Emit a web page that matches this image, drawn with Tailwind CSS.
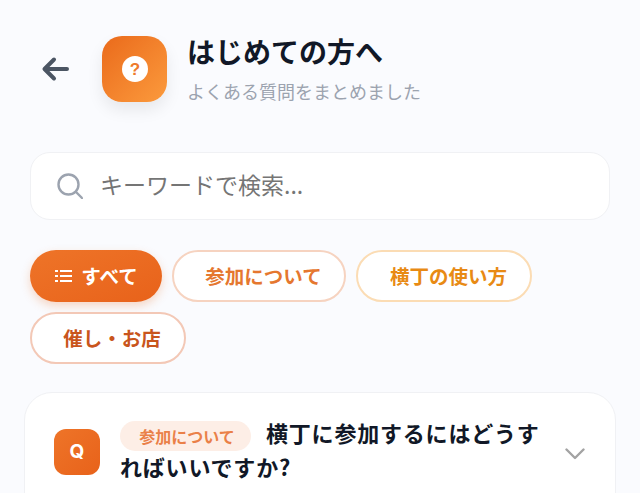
<!DOCTYPE html>
<html lang="ja">
  <head>
    <meta charset="UTF-8" />
    <meta name="viewport" content="width=device-width, initial-scale=1.0" />
    <title>はじめての方へ</title>
    <script src="https://cdn.jsdelivr.net/npm/@tailwindcss/browser@4"></script>
  </head>

  <body class="bg-[#fafbfe] h-[493px] overflow-hidden font-['Noto_Sans_CJK_JP',sans-serif]">
    <header class="flex items-center h-[66px] pl-[40px] mt-[36px]">
      <svg class="w-[32px] h-[32px] text-[#4b5563]" viewBox="0 0 32 32" fill="none" stroke="currentColor" stroke-width="4" stroke-linecap="round" stroke-linejoin="round">
        <path d="M27 16H5M14 6.500 4.500 16l9.500 9.500" />
      </svg>
      <div class="ml-[30px] w-[65px] h-[66px] rounded-[20px] flex items-center justify-center bg-gradient-to-br from-[#ea6a1a] to-[#fb9a3c] shadow-[0_8px_16px_rgba(0,0,0,0.08)]">
        <svg class="w-[26px] h-[26px]" viewBox="0 0 26 26">
          <circle cx="13" cy="13" r="13" fill="#fff" />
          <text x="13" y="19" text-anchor="middle" font-size="17" font-weight="900" fill="#ee7a2a" font-family="Liberation Sans">?</text>
        </svg>
      </div>
      <div class="ml-[20px]">
        <h1 class="text-[28px] leading-[32px] font-bold text-[#111827] -mt-[1px]">はじめての方へ</h1>
        <p class="text-[18px] leading-[24px] text-[#9ca3af] mt-[12px]">よくある質問をまとめました</p>
      </div>
    </header>

    <div class="mx-[30px] mt-[50px] h-[68px] rounded-[20px] bg-white border border-[#f0f1f4] flex items-center pl-[26px]">
      <svg class="w-[26px] h-[26px] text-[#9ca3af]" viewBox="0 0 26 26" fill="none" stroke="currentColor" stroke-width="2.400" stroke-linecap="round">
        <circle cx="11.500" cy="11.500" r="10" />
        <path d="M19 19l6 6" />
      </svg>
      <span class="ml-[17px] text-[23px] leading-[30px] -mt-[5px] text-[#757575]">キーワードで検索...</span>
    </div>

    <div class="flex flex-wrap gap-[10px] mx-[30px] mt-[30px]">
      <button class="h-[52px] w-[132px] rounded-full flex items-center justify-center gap-[9px] text-white text-[19.500px] font-bold bg-gradient-to-br from-[#ee7428] to-[#e8621a] shadow-[0_4px_10px_rgba(234,106,26,0.25)]">
        <svg class="w-[18px] h-[14px]" viewBox="0 0 18 14" fill="none" stroke="#fff" stroke-width="2">
          <path d="M1 2h3M1 7h3M1 12h3" />
          <path d="M6 2h12M6 7h12M6 12h12" />
        </svg>
        すべて
      </button>
      <button class="h-[52px] w-[174px] pl-[9px] rounded-full bg-white border-2 border-[#f6d3c0] text-[#e5772f] text-[19.500px] font-bold">参加について</button>
      <button class="h-[52px] w-[176px] pl-[9px] rounded-full bg-white border-2 border-[#fbdcb4] text-[#e88a14] text-[19.500px] font-bold">横丁の使い方</button>
      <button class="h-[52px] w-[156px] pl-[8px] rounded-full bg-white border-2 border-[#f3c8b6] text-[#c9551c] text-[19.500px] font-bold">催し・お店</button>
    </div>

    <div class="mx-[24px] mt-[28px] bg-white rounded-[28px] border border-[#f0f1f4] pl-[29px] pr-[30px] pt-[24px] pb-[40px] flex items-start">
      <div class="w-[46px] h-[46px] mt-[12px] rounded-[12px] shrink-0 flex items-center justify-center text-white font-bold text-[19px] font-['Inter',sans-serif] bg-gradient-to-br from-[#ee7428] to-[#e8621a]">Q</div>
      <p class="ml-[20px] w-[430px] text-[22px] leading-[31px] font-bold text-[#111827] tracking-[0.800px]"><span class="inline-block h-[30px] w-[131px] rounded-full bg-[#fdeee6] text-[#ea8048] text-[16px] leading-[30px] text-center tracking-normal font-bold mr-[15px] pl-[3px] align-[-1px]">参加について</span>横丁に参加するにはどうすればいいですか?</p>
      <svg class="w-[20px] h-[12px] ml-auto mt-[31px] text-[#a3a3a3]" viewBox="0 0 20 12" fill="none" stroke="currentColor" stroke-width="2.400" stroke-linecap="round" stroke-linejoin="round">
        <path d="M1.500 1.500 10 10l8.500-8.500" />
      </svg>
    </div>
  </body>
</html>
